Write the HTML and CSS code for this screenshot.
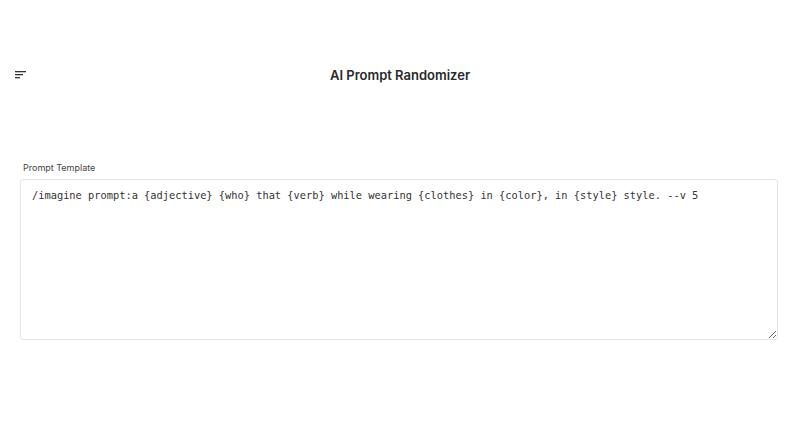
FILE: index.html
```html
<!DOCTYPE html>
<html lang="en">
<head>
  <meta charset="UTF-8">
  <meta name="viewport" content="width=device-width, initial-scale=1.0">
  <title>AI Prompt Randomizer</title>
  <link rel="stylesheet" href="styles.css">
</head>
<body>

  <header class="topbar">
    <button class="menu-btn" aria-label="Menu">
      <svg width="11" height="8" viewBox="0 0 11 8">
        <rect x="0" y="0" width="11" height="1.3" fill="#333"/>
        <rect x="0" y="3" width="8" height="1.3" fill="#333"/>
        <rect x="0" y="6" width="5" height="1.3" fill="#333"/>
      </svg>
    </button>
    <h1>AI Prompt Randomizer</h1>
    <div class="spacer"></div>
  </header>

  <!-- Template -->
  <main class="content">
    <label class="field-label" for="template">Prompt Template</label>
    <textarea id="template" class="template-input">/imagine prompt:a {adjective} {who} that {verb} while wearing {clothes} in {color}, in {style} style. --v 5</textarea>
  </main>

</body>
</html>
```

FILE: styles.css
```css
body {
  font-family: Inter, "Noto Sans", sans-serif;
  margin: 0;
  background: #fff;
  color: #222;
}
.topbar {
  display: flex;
  align-items: center;
  justify-content: space-between;
  height: 44px;
  margin-top: 53px;
  padding: 0 12px;
}
.menu-btn {
  display: flex;
  align-items: center;
  justify-content: center;
  width: 16px;
  height: 16px;
  padding: 0;
  border: none;
  background: none;
  cursor: pointer;
}
.topbar h1 {
  margin: 0;
  font-size: 13px;
  font-weight: 600;
  color: #2a2a2a;
}
.spacer {
  width: 16px;
}
.content {
  display: flex;
  flex-direction: column;
  padding: 65px 22px 0 20px;
}
.field-label {
  margin-left: 3px;
  margin-bottom: 6px;
  font-size: 9px;
  color: #444;
}
.template-input {
  height: 161px;
  box-sizing: border-box;
  padding: 8px 11px;
  border: 1px solid #e5e5e5;
  border-radius: 3px;
  font-family: "DejaVu Sans Mono", monospace;
  font-size: 10.35px;
  line-height: 14px;
  color: #333;
  resize: vertical;
}
```
